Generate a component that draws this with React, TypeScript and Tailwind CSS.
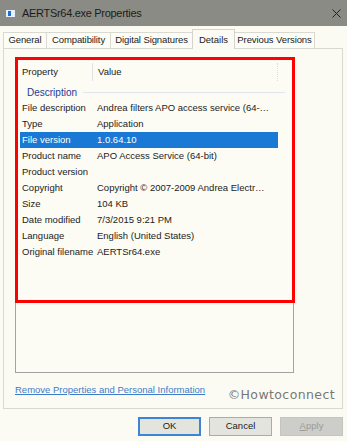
import React from 'react'

const rows = [
  { k: 'File description', v: 'Andrea filters APO access service (64-…' },
  { k: 'Type', v: 'Application' },
  { k: 'File version', v: '1.0.64.10', sel: true },
  { k: 'Product name', v: 'APO Access Service (64-bit)' },
  { k: 'Product version', v: '' },
  { k: 'Copyright', v: 'Copyright © 2007-2009 Andrea Electr…' },
  { k: 'Size', v: '104 KB' },
  { k: 'Date modified', v: '7/3/2015 9:21 PM' },
  { k: 'Language', v: 'English (United States)' },
  { k: 'Original filename', v: 'AERTSr64.exe' },
]

const tabs = [
  { t: 'General', w: 'w-[44px]' },
  { t: 'Compatibility', w: 'w-[65px]' },
  { t: 'Digital Signatures', w: 'w-[83px]' },
  { t: 'Details', w: 'w-[43px]', active: true },
  { t: 'Previous Versions', w: 'w-[81px]' },
]

export default function App() {
  return (
    <div className="w-[347px] h-[441px] bg-[#fbfbf3] font-['Liberation_Sans',Arial,sans-serif] text-[9.5px] text-[#1b1b1b] overflow-hidden">
      {/* title bar */}
      <div className="h-[26px] bg-[#8a8b84] flex items-center pl-[5px] pr-[6px]">
        <svg width="11" height="9" viewBox="0 0 11 9">
          <rect x="0.5" y="0.5" width="10" height="8" fill="#e8f1fb" stroke="#6d8fb8" />
          <rect x="3" y="2" width="3" height="5" fill="#1a6fd1" />
        </svg>
        <span className="ml-[6px] text-[11px] text-[#1c1c1c] tracking-[-0.3px]">AERTSr64.exe Properties</span>
        <svg className="ml-auto" width="9" height="9" viewBox="0 0 9 9">
          <path d="M0.5 0.5 L8.5 8.5 M8.5 0.5 L0.5 8.5" stroke="#222" strokeWidth="1" />
        </svg>
      </div>

      <div className="px-[3px]">
        {/* tabs */}
        <div className="h-[22px] flex items-end">
          {tabs.map((tab) =>
            tab.active ? (
              <div
                key={tab.t}
                className={`${tab.w} h-[20px] -mb-px -ml-px relative z-10 bg-[#fbfbf3] border border-b-0 border-[#d4d4cc] flex items-start justify-center pt-[3px] whitespace-nowrap`}
              >
                {tab.t}
              </div>
            ) : (
              <div
                key={tab.t}
                className={`${tab.w} h-[16px] bg-[#fdfdf8] border border-b-0 border-[#d9d9d1] -ml-px first:ml-0 flex items-center justify-center whitespace-nowrap tracking-[-0.1px]`}
              >
                {tab.t}
              </div>
            )
          )}
        </div>

        {/* panel */}
        <div className="h-[361px] w-[340px] border border-[#d9d9d1] flex flex-col pl-[11px] pt-[8px]">
          {/* list box */}
          <div className="relative w-[279px] h-[316px] border border-[#a3a3a3] bg-[#fcfcf5]">
            {/* header */}
            <div className="flex h-[16px] mt-[6px] items-center">
              <div className="w-[77px] pl-[6px] border-r border-[#e2e2e2] h-[18px] flex items-center">Property</div>
              <div className="pl-[5px] flex-1">Value</div>
              <div className="w-px h-[18px] border-r border-dotted border-[#dcdcdc] mr-[15px]" />
            </div>
            {/* group */}
            <div className="flex items-center h-[16px] mt-[4px] pl-[11px] text-[#1e3a94] text-[10px]">
              <span>Description</span>
              <div className="ml-[6px] h-px flex-1 bg-[#dfe4ee] mr-[8px]" />
            </div>
            {/* rows */}
            <div className="flex flex-col mx-[4px] mr-[15px]">
              {rows.map((r) => (
                <div
                  key={r.k}
                  className={`flex h-[16px] items-center ${r.sel ? 'bg-[#1a79d4] text-white' : ''}`}
                >
                  <div className="w-[77px] pl-[2px] whitespace-nowrap">{r.k}</div>
                  <div className="whitespace-nowrap">{r.v}</div>
                </div>
              ))}
            </div>
            {/* red annotation */}
            <div className="absolute -left-px -top-px w-[280px] h-[246px] border-[3px] border-[#ff0000] pointer-events-none" />
          </div>

          <div className="flex items-center mt-[3px] pr-[7px]">
            <span className="text-[#3d7cc9] underline">Remove Properties and Personal Information</span>
            <span className="ml-auto font-['DejaVu_Sans',sans-serif] text-[12.5px] tracking-[0.4px] text-[#787878] mt-[10px]">©Howtoconnect</span>
          </div>
        </div>

        {/* buttons */}
        <div className="flex justify-end gap-[8px] mt-[8px] pr-[1px]">
          <div className="w-[63px] h-[19px] border-2 border-[#3b84d6] bg-[#e4e4df] flex items-center justify-center">OK</div>
          <div className="w-[63px] h-[19px] border border-[#acaca6] bg-[#e4e4df] flex items-center justify-center">Cancel</div>
          <div className="w-[63px] h-[19px] border border-[#c4c4c0] bg-[#cdcdc9] text-[#9c9c98] flex items-center justify-center">
            <span><span className="underline">A</span>pply</span>
          </div>
        </div>
      </div>
    </div>
  )
}
